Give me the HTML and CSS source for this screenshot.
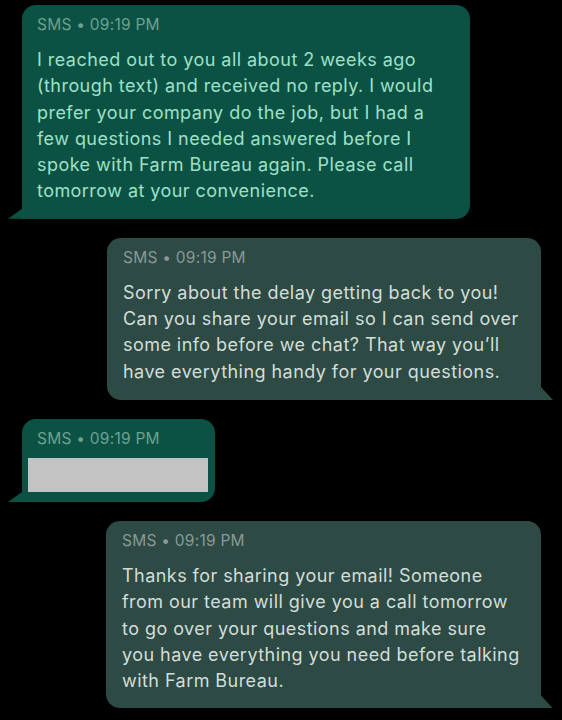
FILE: index.html
```html
<!DOCTYPE html>
<html>
	<head>
		<meta charset="UTF-8">
		<title>SMS</title>
		<link rel="stylesheet" href="styles.css">
	</head>
	<body>
		<div class="thread">
			<div class="msg in msg-1">
				<div class="meta">SMS &bull; 09:19 PM</div>
				<p class="text">I reached out to you all about 2 weeks ago<br>(through text) and received no reply. I would<br>prefer your company do the job, but I had a<br>few questions I needed answered before I<br>spoke with Farm Bureau again. Please call<br>tomorrow at your convenience.</p>
			</div>
			<div class="msg out msg-2">
				<div class="meta">SMS &bull; 09:19 PM</div>
				<p class="text">Sorry about the delay getting back to you!<br>Can you share your email so I can send over<br>some info before we chat? That way you’ll<br>have everything handy for your questions.</p>
			</div>
			<div class="msg in msg-3">
				<div class="meta">SMS &bull; 09:19 PM</div>
				<div class="redacted"></div>
			</div>
			<div class="msg out msg-4">
				<div class="meta">SMS &bull; 09:19 PM</div>
				<p class="text">Thanks for sharing your email! Someone<br>from our team will give you a call tomorrow<br>to go over your questions and make sure<br>you have everything you need before talking<br>with Farm Bureau.</p>
			</div>
		</div>
	</body>
</html>
```

FILE: styles.css
```css
*{
	margin: 0;
	padding: 0;
	box-sizing: border-box;
}
body{
	background: #000;
	font-family: Inter, "Noto Sans", sans-serif;
}
.thread{
	display: flex;
	flex-direction: column;
	gap: 19px;
	padding-top: 5px;
}
.msg{
	position: relative;
	border-radius: 14px;
	padding: 11px 15px 14px;
}
.msg .meta{
	font-size: 15.5px;
	line-height: 18px;
	letter-spacing: 0.25px;
}
.msg .text{
	margin-top: 13px;
	font-size: 18px;
	line-height: 26.3px;
	letter-spacing: 0.45px;
}
/* incoming */
.msg.in{
	align-self: flex-start;
	margin-left: 22px;
	background: #0b5244;
	border-bottom-left-radius: 0;
}
.msg.in .meta{
	color: #6ea191;
}
.msg.in .text{
	color: #9fe0c8;
}
.msg.in::before{
	content: "";
	position: absolute;
	left: -14px;
	bottom: 0;
	width: 14px;
	height: 10px;
	background: #0b5244;
	clip-path: polygon(100% 0, 100% 100%, 0 100%);
}
/* outgoing */
.msg.out{
	align-self: flex-end;
	margin-right: 21px;
	background: #2e4a44;
	border-bottom-right-radius: 0;
	padding-left: 16px;
}
.msg.out .meta{
	color: #88999a;
}
.msg.out .text{
	color: #d2ded9;
}
.msg.out::before{
	content: "";
	position: absolute;
	right: -12px;
	bottom: 0;
	width: 12px;
	height: 13px;
	background: #2e4a44;
	clip-path: polygon(0 0, 100% 100%, 0 100%);
}
.msg-1{
	width: 448px;
}
.msg-2{
	width: 434px;
	padding-bottom: 15px;
}
.msg-3{
	width: 193px;
	padding: 11px 7px 10px 6px;
}
.msg-3 .meta{
	padding-left: 9px;
}
.msg-4{
	width: 435px;
	margin-right: 20px;
}
.redacted{
	margin-top: 10px;
	height: 34px;
	background: #c3c3c3;
}
```
